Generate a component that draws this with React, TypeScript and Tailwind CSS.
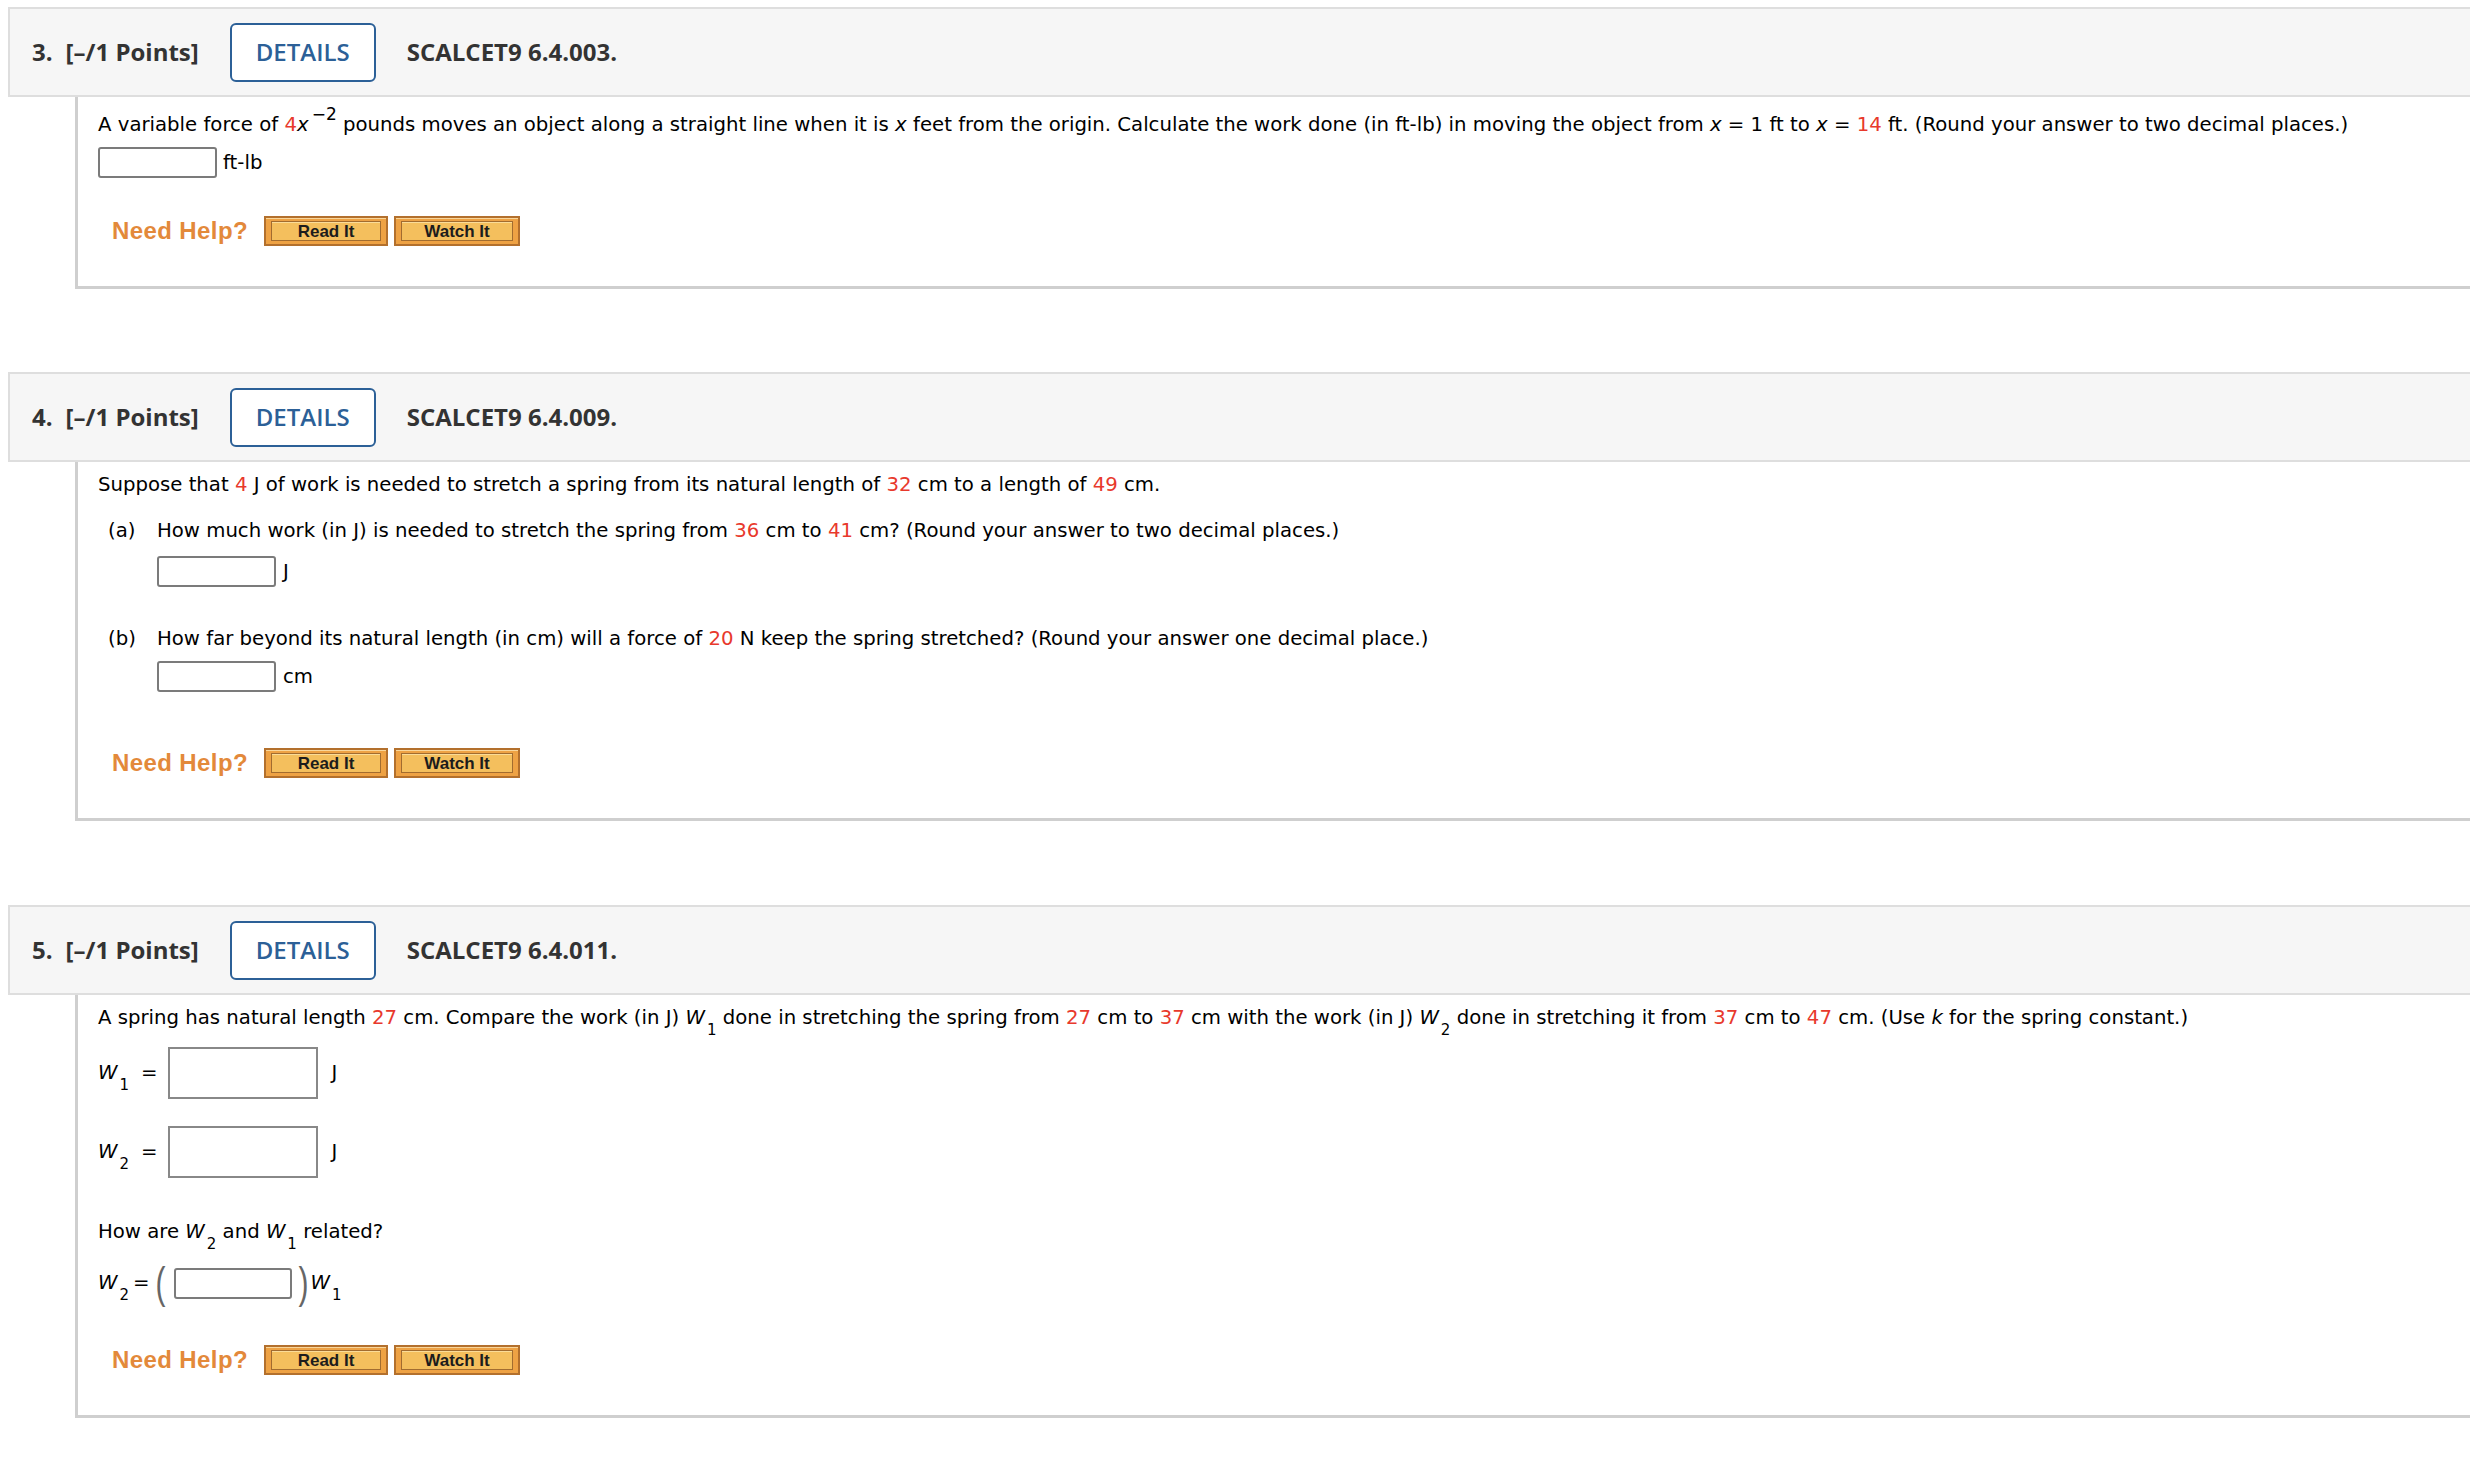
import type { ReactNode } from 'react';

function Red({ children }: { children: ReactNode }) {
  return <span className="text-[#e8392c]">{children}</span>;
}

// italic variable with a lowered index, like W₁
function W({ n }: { n: string }) {
  return (
    <span className="whitespace-nowrap">
      <i>W</i>
      <span className="relative top-[11px] ml-[2px] text-[15px] leading-none">{n}</span>
    </span>
  );
}

function Blank({ className = '' }: { className?: string }) {
  return <input type="text" className={`block bg-white outline-none ${className}`} />;
}

function OrangeButton({ label, className = '' }: { label: string; className?: string }) {
  return (
    <button
      type="button"
      className={`h-[30px] border-2 border-[#b3702d] bg-[#eea244] px-[5px] py-[3px] shadow-[inset_0_1px_0_#f9d69a] ${className}`}
    >
      <span className="flex h-full w-full items-center justify-center border border-[#a26c2f] bg-[#f4bf5d] font-['Liberation_Sans',Arial,sans-serif] text-[17px] font-bold leading-none text-[#1c1c1c] shadow-[inset_0_1px_0_#fbdc98]">
        {label}
      </span>
    </button>
  );
}

function NeedHelp({ className = '' }: { className?: string }) {
  return (
    <div className={`flex items-center ${className}`}>
      <span className="ml-[14px] font-['Liberation_Sans',Arial,sans-serif] text-[24px] font-bold leading-none tracking-[0.4px] text-[#e3893a]">
        Need Help?
      </span>
      <OrangeButton label="Read It" className="ml-[16px] w-[124px]" />
      <OrangeButton label="Watch It" className="ml-[6px] w-[126px]" />
    </div>
  );
}

function Question({
  n,
  code,
  className = '',
  children,
}: {
  n: number;
  code: string;
  className?: string;
  children: ReactNode;
}) {
  return (
    <section className={className}>
      <div className="ml-[8px] flex h-[90px] items-center border-2 border-r-0 border-[#dedede] bg-[#f6f6f6] pl-[22px] font-['Open_Sans',sans-serif] text-[24px] font-bold leading-none text-[#333333]">
        <span>{n}.</span>
        <span className="ml-[13px]">[–/1 Points]</span>
        <span className="ml-[31px] flex h-[59px] w-[146px] items-center justify-center rounded-[6px] border-2 border-[#2c6097] bg-white font-semibold text-[#2c6097]">
          DETAILS
        </span>
        <span className="ml-[31px]">{code}</span>
      </div>
      <div className="ml-[75px] border-b-[3px] border-l-[3px] border-[#cfcfcf] pb-[40px] pl-[20px] pt-[8px]">
        {children}
      </div>
    </section>
  );
}

export default function App() {
  return (
    <div className="min-h-screen w-full overflow-hidden bg-white pt-[7px] font-['DejaVu_Sans',Verdana,sans-serif] text-[19.7px] leading-[30px] text-black">
      <Question n={3} code="SCALCET9 6.4.003.">
        <p className="pt-[5px]">
          A variable force of <Red>4</Red>
          <i>x</i>
          <span className="relative -top-[11px] ml-[3px] text-[17px] leading-none">−2</span> pounds moves an
          object along a straight line when it is <i>x</i> feet from the origin. Calculate the work done (in
          ft-lb) in moving the object from <i>x</i> = 1 ft to <i>x</i> = <Red>14</Red> ft. (Round your answer to
          two decimal places.)
        </p>
        <div className="mt-[7px] flex items-center">
          <Blank className="h-[31px] w-[119px] rounded-[3px] border-2 border-[#7b7b7b]" />
          <span className="ml-[6px]">ft-lb</span>
        </div>
        <NeedHelp className="mt-[38px]" />
      </Question>

      <Question n={4} code="SCALCET9 6.4.009." className="mt-[83px]">
        <p>
          Suppose that <Red>4</Red> J of work is needed to stretch a spring from its natural length of{' '}
          <Red>32</Red> cm to a length of <Red>49</Red> cm.
        </p>
        <div className="ml-[10px] mt-[16px] flex">
          <span className="w-[49px] shrink-0">(a)</span>
          <div>
            <p>
              How much work (in J) is needed to stretch the spring from <Red>36</Red> cm to <Red>41</Red> cm?
              (Round your answer to two decimal places.)
            </p>
            <div className="mt-[10px] flex items-center">
              <Blank className="h-[31px] w-[119px] rounded-[3px] border-2 border-[#7b7b7b]" />
              <span className="ml-[7px]">J</span>
            </div>
          </div>
        </div>
        <div className="ml-[10px] mt-[37px] flex">
          <span className="w-[49px] shrink-0">(b)</span>
          <div>
            <p>
              How far beyond its natural length (in cm) will a force of <Red>20</Red> N keep the spring
              stretched? (Round your answer one decimal place.)
            </p>
            <div className="mt-[7px] flex items-center">
              <Blank className="h-[31px] w-[119px] rounded-[3px] border-2 border-[#7b7b7b]" />
              <span className="ml-[7px]">cm</span>
            </div>
          </div>
        </div>
        <NeedHelp className="mt-[56px]" />
      </Question>

      <Question n={5} code="SCALCET9 6.4.011." className="mt-[84px]">
        <p>
          A spring has natural length <Red>27</Red> cm. Compare the work (in J) <W n="1" /> done in stretching
          the spring from <Red>27</Red> cm to <Red>37</Red> cm with the work (in J) <W n="2" /> done in
          stretching it from <Red>37</Red> cm to <Red>47</Red> cm. (Use <i>k</i> for the spring constant.)
        </p>
        <div className="mt-[14px] flex items-center">
          <span className="w-[43px] shrink-0">
            <W n="1" />
          </span>
          <span>=</span>
          <Blank className="ml-[10px] h-[52px] w-[150px] border-2 border-[#888888]" />
          <span className="ml-[14px]">J</span>
        </div>
        <div className="mt-[27px] flex items-center">
          <span className="w-[43px] shrink-0">
            <W n="2" />
          </span>
          <span>=</span>
          <Blank className="ml-[10px] h-[52px] w-[150px] border-2 border-[#888888]" />
          <span className="ml-[14px]">J</span>
        </div>
        <p className="mt-[39px]">
          How are <W n="2" /> and <W n="1" /> related?
        </p>
        <div className="mt-[14px] flex h-[44px] items-center">
          <span className="w-[35px] shrink-0">
            <W n="2" />
          </span>
          <span>=</span>
          <span className="ml-[6px] inline-block scale-y-150 font-['Liberation_Sans',Arial,sans-serif] text-[30px] font-light leading-none text-[#666666]">
            (
          </span>
          <Blank className="ml-[8px] h-[31px] w-[118px] rounded-[3px] border-2 border-[#7b7b7b]" />
          <span className="ml-[7px] inline-block scale-y-150 font-['Liberation_Sans',Arial,sans-serif] text-[30px] font-light leading-none text-[#666666]">
            )
          </span>
          <span className="ml-[2px]">
            <W n="1" />
          </span>
        </div>
        <NeedHelp className="mt-[40px]" />
      </Question>
    </div>
  );
}
